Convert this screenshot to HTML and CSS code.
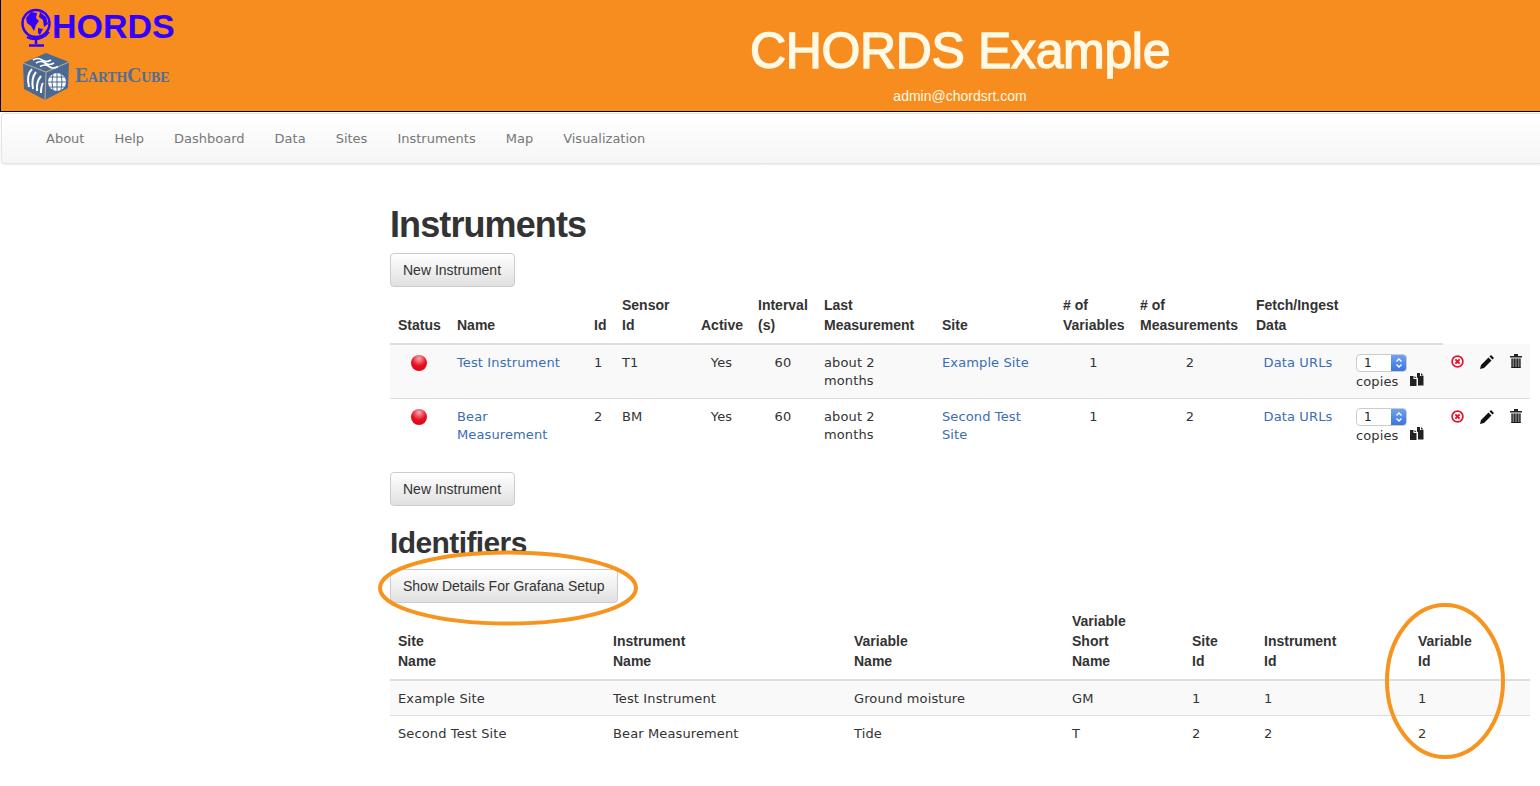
FILE: index.html
```html
<!DOCTYPE html>
<html lang="en">
<head>
<meta charset="utf-8">
<title>CHORDS Example</title>
<link rel="stylesheet" href="styles.css">
</head>
<body>
<svg class="sprites" width="0" height="0" aria-hidden="true">
  <symbol id="i-spin" viewBox="0 0 8 12"><path d="M1.500 4.500L4 2l2.500 2.500M1.500 7.500L4 10l2.500-2.500" fill="none" stroke="#fff" stroke-width="1.300"/></symbol>
  <symbol id="i-dup" viewBox="0 0 14 14"><path d="M0 4h3.500v3h3v7H0zM4.500 4l2 2h-2z" fill="#222"/><path d="M7 1h3v3h3.500v9.500H8V6.500L7 5.500zM11 1l2.500 2.500H11z" fill="#222"/></symbol>
  <symbol id="i-x" viewBox="0 0 13 13"><circle cx="6.500" cy="6.500" r="5.400" fill="#fff" stroke="#e8112d" stroke-width="1.700"/><path d="M4.400 4.400l4.200 4.200M8.600 4.400l-4.200 4.200" stroke="#e8112d" stroke-width="2"/></symbol>
  <symbol id="i-pen" viewBox="0 0 14 14"><path d="M0 14l1-4 7.500-7.500 3 3L4 13zM9.500 1.500L11 0l3 3-1.500 1.500z" fill="#111"/></symbol>
  <symbol id="i-trash" viewBox="0 0 12 14"><path d="M0 2h12v1.500H0zM4 0h4v2H4z" fill="#222"/><path d="M1.500 4.500h9V14h-9z" fill="#777"/><path d="M2 4.500V14M4.700 4.500V14M7.300 4.500V14M10 4.500V14M1.500 13.500h9" stroke="#1a1a1a" stroke-width="1"/></symbol>
</svg>
<header class="banner">
  <div class="logos">
    <div class="logo-chords">
      <svg class="globe" width="33" height="39" viewBox="0 0 33 39"><circle cx="16" cy="15.500" r="13.500" fill="none" stroke="#3300ff" stroke-width="2.500"/><path d="M6 10l5-6 6 1-1 5 3 3-3 4-2 6-3-5-4-3zM20 4l6 5 2 7-4 3-1-7-4-3zM18 20l5 1-3 6-2-2z" fill="#3300ff"/><path d="M29 24A17 17 0 0 1 7 29" fill="none" stroke="#3300ff" stroke-width="2"/><path d="M16 31v5M9 37.500h15" stroke="#3300ff" stroke-width="2.500" fill="none"/></svg>
      <span class="logo-text">HORDS</span>
    </div>
    <div class="logo-cube">
      <svg width="48" height="48" viewBox="0 0 48 48"><path d="M24 1L47 10 46 36 23 48 2 37 1 11z" fill="#4a6a94"/><path d="M1 11L24 20 47 10M24 20L23 48" stroke="#b5a48e" stroke-width="1.200" fill="none"/><path d="M11 8q5-3 9 0t9 0M14 11q5-3 9 0t9 0M18 14.500q5-3 9 0t9 0" stroke="#fff" stroke-width="1.700" fill="none"/><circle cx="35" cy="30" r="9" fill="#fff"/><path d="M26 30h18M35 21v18M28 25h14M28 35h14M31 22q-2 8 0 16M39 22q2 8 0 16" stroke="#4a6a94" stroke-width="1" fill="none"/><path d="M7 35q-3-12 3-18M11 37q-2-11 3-17M15 39q-1-9 4-15M19 41q0-7 2-10" stroke="#fff" stroke-width="2" fill="none"/></svg>
      <span class="cube-text">EarthCube</span>
    </div>
  </div>
  <div class="title-block">
    <div class="site-title">CHORDS Example</div>
    <div class="site-email">admin@chordsrt.com</div>
  </div>
</header>
<nav class="navbar">
  <a href="#">About</a><a href="#">Help</a><a href="#">Dashboard</a><a href="#">Data</a><a href="#">Sites</a><a href="#">Instruments</a><a href="#">Map</a><a href="#">Visualization</a>
</nav>
<main class="content">
  <h1>Instruments</h1>
  <button class="btn btn-new">New Instrument</button>
  <table class="tbl inst">
    <colgroup><col class="c1"><col class="c2"><col class="c3"><col class="c4"><col class="c5"><col class="c6"><col class="c7"><col class="c8"><col class="c9"><col class="c10"><col class="c11"><col class="c12"><col class="c13"><col class="c14"><col class="c15"></colgroup>
    <thead>
      <tr><th>Status</th><th>Name</th><th>Id</th><th>Sensor Id</th><th>Active</th><th>Interval (s)</th><th>Last Measurement</th><th>Site</th><th># of Variables</th><th># of Measurements</th><th>Fetch/Ingest Data</th><th></th><th class="nb" colspan="3"></th></tr>
    </thead>
    <tbody>
      <tr class="odd">
        <td><span class="led"></span></td><td><a href="#">Test Instrument</a></td><td>1</td><td>T1</td><td class="ctr">Yes</td><td class="ctr">60</td><td>about 2 months</td><td><a href="#">Example Site</a></td><td class="ctr">1</td><td class="ctr">2</td><td class="ctr"><a href="#">Data URLs</a></td>
        <td class="copy"><span class="num"><span class="num-val">1</span><span class="spin"><svg width="8" height="12"><use href="#i-spin"/></svg></span></span> copies <svg class="dup" width="14" height="14"><use href="#i-dup"/></svg></td>
        <td class="ic"><svg width="13" height="13"><use href="#i-x"/></svg></td>
        <td class="ic"><svg width="14" height="14"><use href="#i-pen"/></svg></td>
        <td class="ic"><svg class="trash" width="12" height="14"><use href="#i-trash"/></svg></td>
      </tr>
      <tr>
        <td><span class="led"></span></td><td><a href="#">Bear Measurement</a></td><td>2</td><td>BM</td><td class="ctr">Yes</td><td class="ctr">60</td><td>about 2 months</td><td><a href="#">Second Test Site</a></td><td class="ctr">1</td><td class="ctr">2</td><td class="ctr"><a href="#">Data URLs</a></td>
        <td class="copy"><span class="num"><span class="num-val">1</span><span class="spin"><svg width="8" height="12"><use href="#i-spin"/></svg></span></span> copies <svg class="dup" width="14" height="14"><use href="#i-dup"/></svg></td>
        <td class="ic"><svg width="13" height="13"><use href="#i-x"/></svg></td>
        <td class="ic"><svg width="14" height="14"><use href="#i-pen"/></svg></td>
        <td class="ic"><svg class="trash" width="12" height="14"><use href="#i-trash"/></svg></td>
      </tr>
    </tbody>
  </table>
  <button class="btn btn-new btn-low">New Instrument</button>
  <h2>Identifiers</h2>
  <button class="btn">Show Details For Grafana Setup</button>
  <table class="tbl ids">
    <colgroup><col class="d1"><col class="d2"><col class="d3"><col class="d4"><col class="d5"><col class="d6"><col class="d7"></colgroup>
    <thead>
      <tr><th>Site<br>Name</th><th>Instrument<br>Name</th><th>Variable<br>Name</th><th>Variable<br>Short<br>Name</th><th>Site<br>Id</th><th>Instrument<br>Id</th><th>Variable<br>Id</th></tr>
    </thead>
    <tbody>
      <tr class="odd"><td>Example Site</td><td>Test Instrument</td><td>Ground moisture</td><td>GM</td><td>1</td><td>1</td><td>1</td></tr>
      <tr><td>Second Test Site</td><td>Bear Measurement</td><td>Tide</td><td>T</td><td>2</td><td>2</td><td>2</td></tr>
    </tbody>
  </table>
  <svg class="ring ring-a" width="262" height="78" viewBox="0 0 262 78"><ellipse cx="130" cy="39" rx="128" ry="35.500" fill="none" stroke="#f7941e" stroke-width="4"/></svg>
  <svg class="ring ring-b" width="122" height="158" viewBox="0 0 122 158"><ellipse cx="61" cy="79" rx="58" ry="76" fill="none" stroke="#f7941e" stroke-width="4"/></svg>
</main>
</body>
</html>
```
FILE: styles.css
```css
* { box-sizing: border-box; }
html, body { margin: 0; padding: 0; }
body { background: #fff; color: #333; font-family: "DejaVu Sans", sans-serif; font-size: 13px; letter-spacing: .12px; line-height: 18px; height: 786px; overflow: hidden; }
a { color: #3a6db5; text-decoration: none; }
.sprites { position: absolute; }

.banner { display: flex; height: 112px; background: #f78d1f; border: 1px solid #000; border-top: 0; border-right: 0; letter-spacing: 0; }
.logos { width: 379px; padding: 8px 0 0 19px; }
.logo-chords { display: flex; align-items: flex-start; height: 41px; }
.globe { margin-right: -1px; }
.logo-text { font: bold 34px/36px "Liberation Sans", sans-serif; color: #3300ff; }
.logo-cube { display: flex; align-items: center; margin-top: 3px; margin-left: 2px; }
.cube-text { font: bold 20px/24px "Liberation Serif", serif; font-variant: small-caps; color: #4f6f96; margin-left: 5px; margin-top: -2px; letter-spacing: -.25px; }
.title-block { flex: 1; text-align: center; color: #fff9e6; font-family: "Liberation Sans", sans-serif; }
.site-title { font-size: 50px; line-height: 60px; margin-top: 21px; letter-spacing: -.35px; -webkit-text-stroke: 1.4px #fff9e6; }
.site-email { font-size: 14px; line-height: 20px; margin-top: 5px; }

.navbar { display: flex; height: 51px; margin: 1px 0 0 1px; padding: 1px 29px 0; align-items: center; background: linear-gradient(#fff, #f6f6f6); border: 1px solid #e4e4e4; border-right: 0; box-shadow: 0 1px 2px rgba(0,0,0,.08); border-radius: 4px 0 0 4px; letter-spacing: 0; }
.navbar a { color: #777; padding: 0 15px; font-size: 13px; }

.content { position: relative; padding: 41px 10px 0 390px; letter-spacing: .12px; }
h1 { font: bold 36px/40px "Liberation Sans", sans-serif; letter-spacing: -.9px; margin: 0 0 8px; color: #333; }
h2 { font: bold 30px/36px "Liberation Sans", sans-serif; letter-spacing: -.6px; margin: 19px 0 8px; color: #333; }
.btn { display: block; height: 34px; padding: 0 12px; background: linear-gradient(#fff, #e0e0e0); border: 1px solid #ccc; border-radius: 4px; font: 14px/20px "Liberation Sans", sans-serif; color: #333; text-align: left; }
.btn-new { width: 125px; }
.btn-low { margin-top: 20px; }

.tbl { border-collapse: collapse; table-layout: fixed; width: 1140px; }
.tbl th { font: bold 14px/20px "Liberation Sans", sans-serif; letter-spacing: 0; text-align: left; vertical-align: bottom; padding: 8px; border-bottom: 2px solid #ddd; }
.tbl th.nb { border-bottom: 0; }
.tbl td { padding: 9px 8px 7px; vertical-align: top; border-bottom: 1px solid #ddd; }
.tbl tr:last-child td { border-bottom: 0; }
.odd td { background: #f9f9f9; }
.ctr { text-align: center; }
.c1 { width: 59px; } .c2 { width: 137px; } .c3 { width: 28px; } .c4 { width: 79px; } .c5 { width: 57px; } .c6 { width: 66px; } .c7 { width: 118px; } .c8 { width: 121px; } .c9 { width: 77px; } .c10 { width: 116px; } .c11 { width: 100px; } .c12 { width: 95px; } .c13 { width: 29px; } .c14 { width: 29px; } .c15 { width: 29px; }
.d1 { width: 215px; } .d2 { width: 241px; } .d3 { width: 218px; } .d4 { width: 120px; } .d5 { width: 72px; } .d6 { width: 154px; } .d7 { width: 120px; }

.led { display: block; width: 16px; height: 16px; margin: 1px 0 0 13px; border-radius: 50%; background: radial-gradient(circle at 50% 22%, #f6aab0 0, #e81020 50%, #d8001c 100%); }
.num { display: inline-flex; width: 51px; height: 18px; border: 1px solid #ccc; border-radius: 4px; vertical-align: top; background: #fff; overflow: hidden; font-size: 12px; line-height: 16px; }
.num-val { flex: 1; padding-left: 7px; color: #222; }
.spin { width: 15px; background: linear-gradient(#6ea2ef, #3b75e0); display: flex; align-items: center; justify-content: center; }
.dup { vertical-align: 0; margin-left: 7px; }
.tbl td.ic { padding: 9px 0 7px; }
.ic svg { display: block; margin: 2px auto 0; }
.ic svg.trash { margin-top: 1px; }

.ring { position: absolute; pointer-events: none; }
.ring-a { left: 378px; top: 385px; }
.ring-b { left: 1384px; top: 438px; }
```
